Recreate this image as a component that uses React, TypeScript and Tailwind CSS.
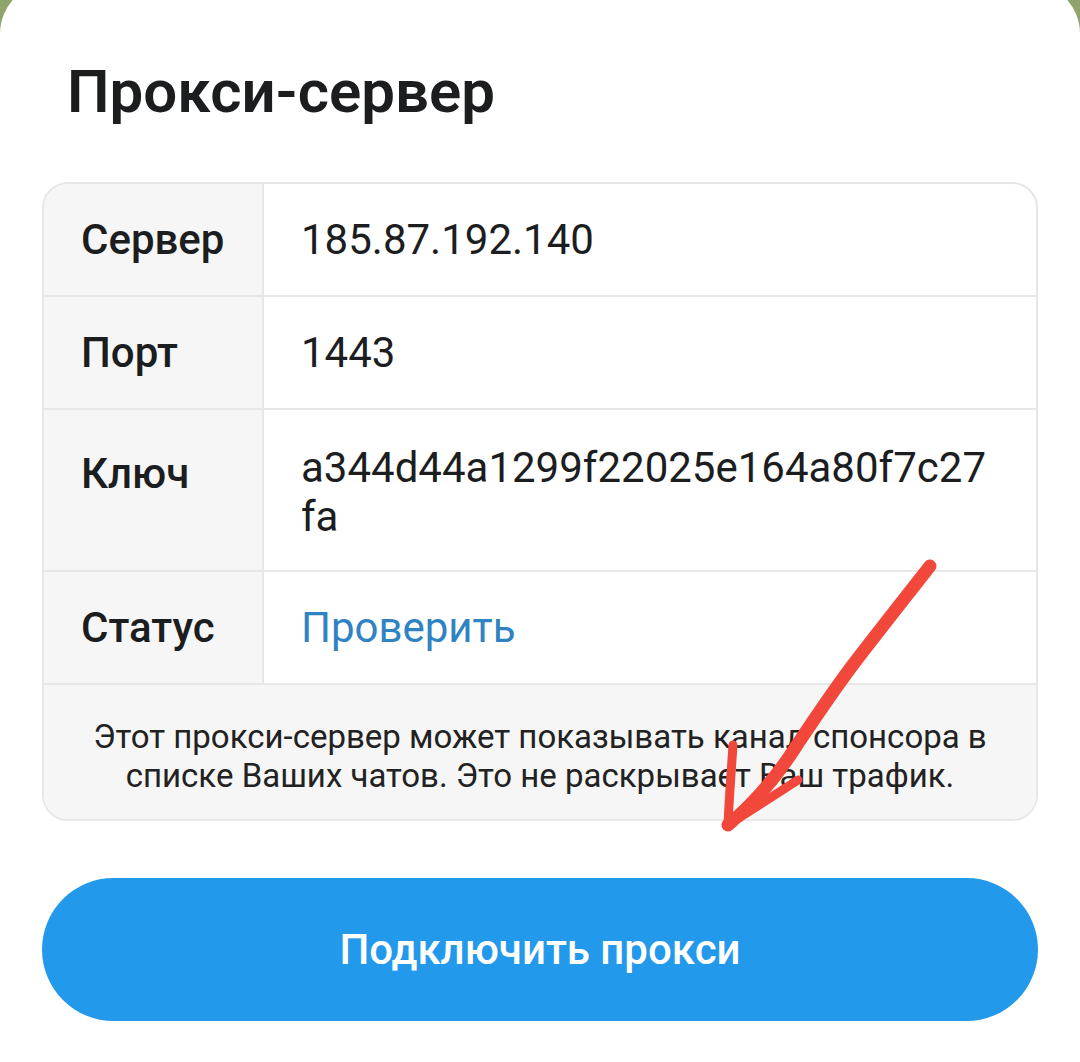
const rows = [
  { label: "Сервер", value: "185.87.192.140" },
  { label: "Порт", value: "1443" },
  { label: "Ключ", value: "a344d44a1299f22025e164a80f7c27fa", top: true },
  { label: "Статус", value: "Проверить", link: true },
];

function RedArrow() {
  return (
    <svg
      className="pointer-events-none absolute left-0 top-0"
      width="1080"
      height="1062"
      viewBox="0 0 1080 1062"
    >
      <path
        d="M930 566 C 905 598, 878 632, 852 666 C 834 690, 815 718, 797 745 C 778 775, 754 803, 728 825"
        fill="none"
        stroke="#f1483b"
        strokeWidth="13"
        strokeLinecap="round"
      />
      <path
        d="M733 745 C 731 775, 729 800, 728 825 L 798 780"
        fill="none"
        stroke="#f1483b"
        strokeWidth="9"
        strokeLinecap="round"
        strokeLinejoin="round"
      />
    </svg>
  );
}

export default function App() {
  return (
    <div
      className="relative h-[1062px] w-[1080px] overflow-hidden bg-[#8fa46c]"
      style={{ fontFamily: "Roboto, 'Noto Sans', sans-serif" }}
    >
      <div className="mt-[-18px] h-[1100px] rounded-t-[52px] bg-white px-[42px] pt-[74px]">
        <h1 className="pl-[25px] text-[60px] font-semibold leading-[72px] text-[#1c1d1f]">
          Прокси-сервер
        </h1>

        <div className="mt-[54px] overflow-hidden rounded-[26px] border-2 border-[#e7e7e7]">
          {rows.map((row) => (
            <div
              key={row.label}
              className="grid grid-cols-[220px_1fr] border-b-2 border-[#e7e7e7]"
            >
              <div
                className={
                  "flex border-r-2 border-[#e7e7e7] bg-[#f6f6f6] px-[37px] text-[42px] font-medium text-[#1c1d1f] " +
                  (row.top ? "items-start pt-[32px] min-h-[160px]" : "h-[111px] items-center")
                }
              >
                {row.label}
              </div>
              <div
                className={
                  "flex px-[37px] text-[42px] leading-[49px] " +
                  (row.link ? "text-[#2f83c3] " : "text-[#1c1d1f] ") +
                  (row.top ? "items-start pt-[33px]" : "items-center")
                }
              >
                <span className={row.top ? "break-all" : ""}>{row.value}</span>
              </div>
            </div>
          ))}
          <div className="bg-[#f6f6f6] px-[36px] pb-[24px] pt-[32px] text-center text-[33px] leading-[39px] text-[#222]">
            Этот прокси-сервер может показывать канал спонсора в списке Ваших
            чатов. Это не раскрывает Ваш трафик.
          </div>
        </div>

        <button className="mt-[57px] flex h-[143px] w-full items-center justify-center rounded-full bg-[#2399ec] text-[42px] font-medium text-white">
          Подключить прокси
        </button>
      </div>
      <RedArrow />
    </div>
  );
}
